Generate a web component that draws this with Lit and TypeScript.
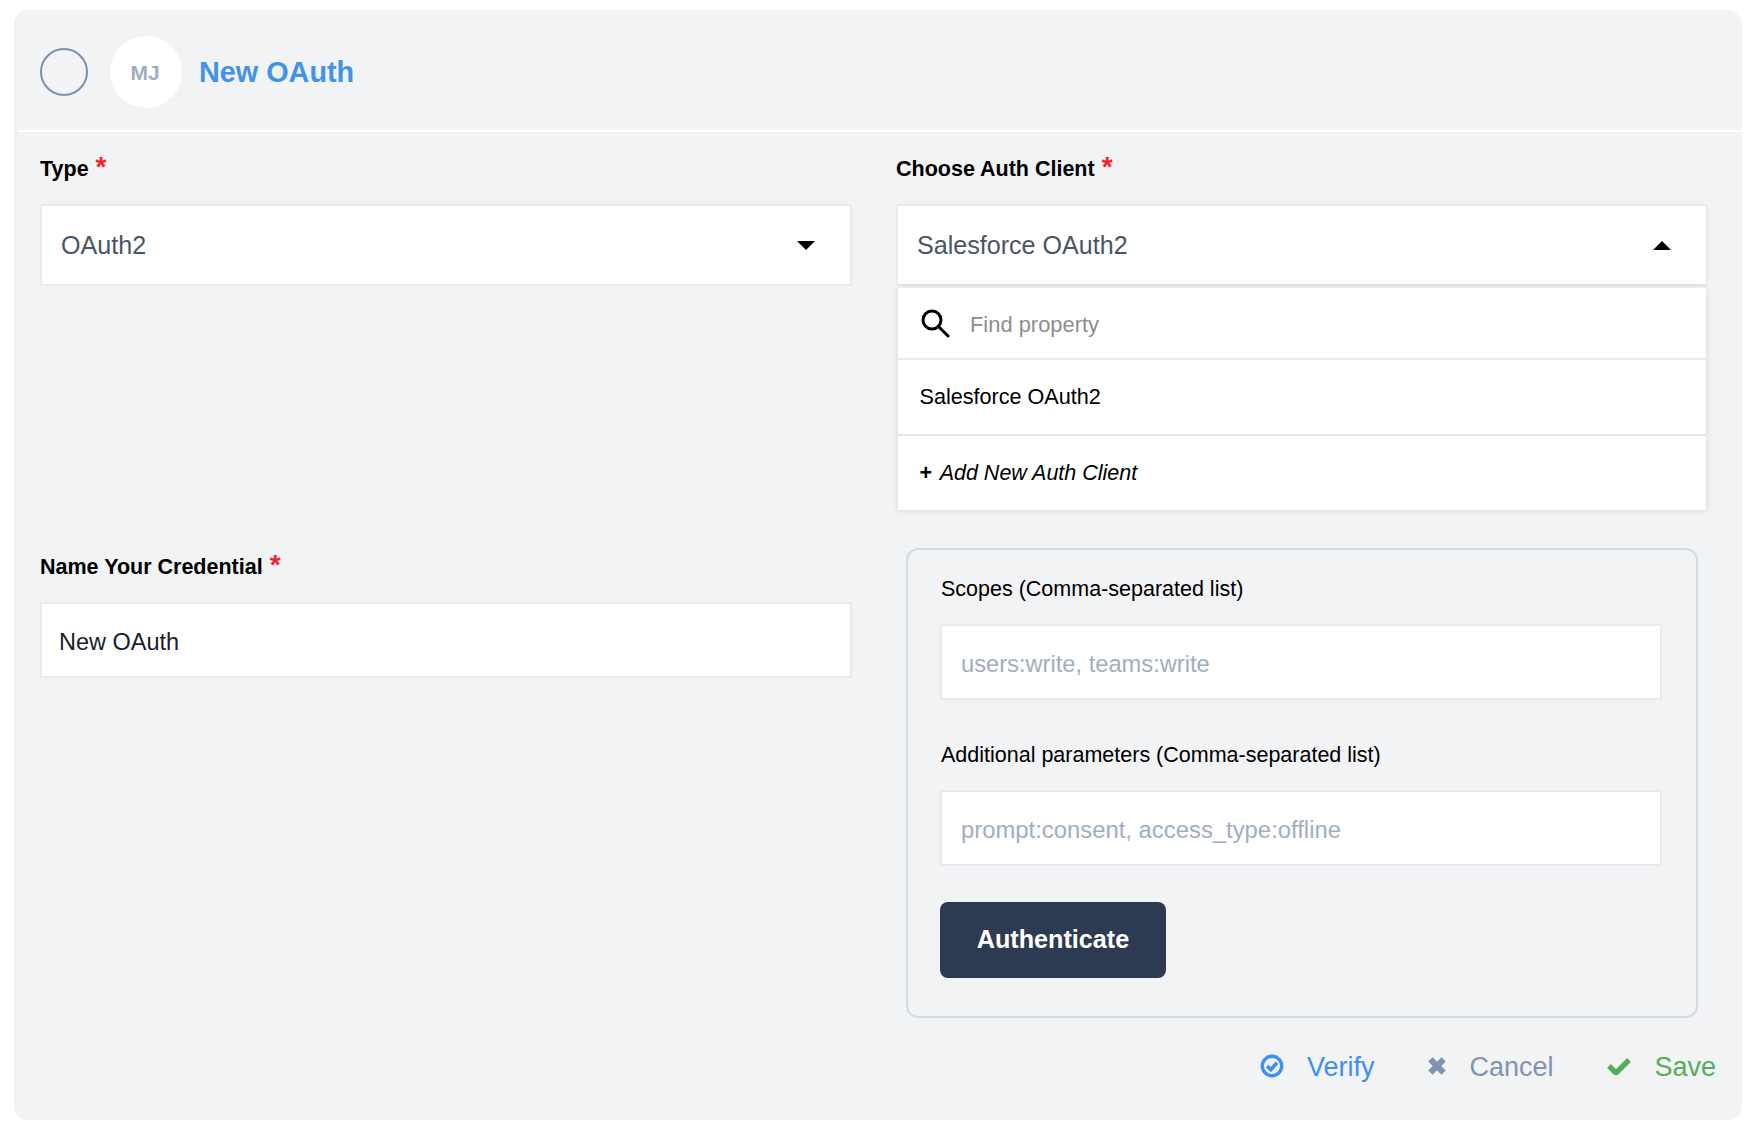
import { LitElement, html, css } from "lit";
import { customElement } from "lit/decorators.js";

@customElement("app-root")
export class AppRoot extends LitElement {
  static styles = css`
    :host { display: block; font-family: "Liberation Sans", Arial, sans-serif; padding: 10px 12px 10px 14px; background: #fff; color: #000; }
    .card { background: #f1f3f5; border-radius: 14px; height: 1110px; box-sizing: border-box; display: flex; flex-direction: column; }
    .header { height: 116px; margin-left: 4px; border-bottom: 2px solid #fff; display: flex; align-items: center; padding-left: 22px; padding-top: 4px; box-sizing: content-box; }
    .check { width: 48px; height: 48px; box-sizing: border-box; border: 2px solid #7b90ae; border-radius: 50%; }
    .avatar { width: 72px; height: 72px; box-sizing: border-box; padding: 2px 2px 0 0; border-radius: 50%; background: #fff; margin-left: 22px; display: flex; align-items: center; justify-content: center; font-size: 21px; font-weight: 700; color: #a0aec0; }
    .title { margin-left: 17px; font-size: 28.8px; font-weight: 700; color: #4392ea; }
    .grid { display: grid; grid-template-columns: 812px 812px; column-gap: 44px; padding-left: 26px; }
    .top { height: 416px; padding-top: 20px; box-sizing: border-box; }
    .label { font-size: 21.5px; font-weight: 700; height: 34px; line-height: 34px; margin-bottom: 18px; display: flex; }
    .star { color: #f5222d; margin-left: 7px; font-size: 28px; line-height: 30px; }
    .select { position: relative; height: 82px; box-sizing: border-box; background: #fff; border: 2px solid #e8eaed; border-radius: 3px; display: flex; align-items: center; justify-content: space-between; padding: 0 35px 0 19px; font-size: 25.1px; color: #4a5568; }
    .tri { width: 0; height: 0; border-left: 9px solid transparent; border-right: 9px solid transparent; }
    .tri.down { border-top: 9px solid #000; }
    .tri.up { border-bottom: 9px solid #000; }
    .menu { position: absolute; left: 0; right: 0; top: 80px; background: #fff; box-shadow: 0 1px 6px rgba(0,0,0,.12); font-size: 21.6px; color: #000; border-top: 2px solid #e8eaed; }
    .find { height: 70px; border-bottom: 2px solid #e8eaed; display: flex; align-items: center; padding-left: 22px; color: #8e8e8e; font-size: 21.9px; }
    .find svg { width: 30px; height: 30px; margin-right: 20px; }
    .find span { margin-top: 4px; }
    .opt { height: 74px; display: flex; align-items: center; padding-left: 21.5px; }
    .opt + .opt { border-top: 2px solid #e3e5e8; }
    .opt i { font-style: italic; margin-left: 7.5px; font-size: 21.5px; }
    .opt b { font-weight: 700; }
    .name-label { margin-top: 2px; }
    .input { height: 76px; box-sizing: border-box; background: #fff; border: 2px solid #e8eaed; border-radius: 2px; display: flex; align-items: center; padding: 5px 0 0 17px; font-size: 23.5px; color: #1a202c; }
    .input.ph { color: #a0aec0; }
    .panel { margin-left: 10px; width: 792px; height: 470px; box-sizing: border-box; border: 2px solid #d2dae6; border-radius: 12px; padding: 22px 34px 0 32px; }
    .plabel { font-size: 21.5px; height: 34px; line-height: 34px; margin-bottom: 18px; padding-left: 1px; }
    .panel .input { height: 76px; margin-bottom: 38px; font-size: 23.7px; padding: 4px 0 0 19px; }
    .panel .input.last { margin-bottom: 36px; font-size: 23.85px; }
    .auth { width: 226px; height: 76px; box-sizing: border-box; padding-bottom: 2px; background: #2d3b52; color: #fff; border-radius: 8px; font-size: 25.2px; font-weight: 700; display: flex; align-items: center; justify-content: center; }
    .footer { display: flex; justify-content: flex-end; align-items: center; padding: 34px 26px 0 0; font-size: 27px; }
    .act { display: flex; align-items: center; margin-left: 54px; }
    .act svg { margin: -3px 23px 0 0; }
    .blue { color: #3f8ef0; } .grey { color: #8193ad; } .green { color: #55ad5b; }
  `;

  render() {
    return html`<div class="card">
      <div class="header"><div class="check"></div><div class="avatar">MJ</div><div class="title">New OAuth</div></div>
      <div class="grid top">
        <div>
          <div class="label">Type<span class="star">*</span></div>
          <div class="select"><span>OAuth2</span><span class="tri down"></span></div>
        </div>
        <div>
          <div class="label">Choose Auth Client<span class="star">*</span></div>
          <div class="select"><span>Salesforce OAuth2</span><span class="tri up"></span>
            <div class="menu">
              <div class="find"><svg viewBox="0 0 30 30" fill="none" stroke="#000" stroke-width="3"><circle cx="12" cy="12" r="9"/><path d="M18.5 18.5 L28 28" stroke-linecap="round"/></svg><span>Find property</span></div>
              <div class="opt">Salesforce OAuth2</div>
              <div class="opt"><b>+</b><i>Add New Auth Client</i></div>
            </div>
          </div>
        </div>
      </div>
      <div class="grid">
        <div>
          <div class="label name-label">Name Your Credential<span class="star">*</span></div>
          <div class="input">New OAuth</div>
        </div>
        <div class="panel">
          <div class="plabel">Scopes (Comma-separated list)</div>
          <div class="input ph">users:write, teams:write</div>
          <div class="plabel">Additional parameters (Comma-separated list)</div>
          <div class="input ph last">prompt:consent, access_type:offline</div>
          <div class="auth">Authenticate</div>
        </div>
      </div>
      <div class="footer">
        <div class="act blue"><svg width="24" height="24" viewBox="0 0 24 24" fill="none" stroke="#3f8ef0"><circle cx="12" cy="12" r="9.7" stroke-width="3.4"/><path d="M7 12 L10.8 15.6 L17 8.8" stroke-width="3.6"/></svg>Verify</div>
        <div class="act grey"><svg width="18" height="18" viewBox="0 0 18 18" fill="none" stroke="#8193ad"><path d="M2.4 2.4 L15.6 15.6 M15.6 2.4 L2.4 15.6" stroke-width="6.2"/></svg>Cancel</div>
        <div class="act green"><svg width="24" height="18" viewBox="0 0 24 18" fill="none" stroke="#55ad5b"><path d="M2 9 L9 16 L22 3" stroke-width="5.4"/></svg>Save</div>
      </div>
    </div>`;
  }
}
